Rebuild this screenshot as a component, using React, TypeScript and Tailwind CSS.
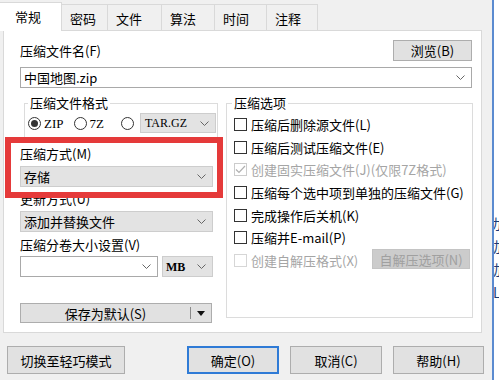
import React from "react";

const Chevron = () => (
  <svg width="9" height="5" viewBox="0 0 9 5" className="shrink-0">
    <polyline points="0.5,0.5 4.5,4.5 8.5,0.5" fill="none" stroke="#666" strokeWidth="1" />
  </svg>
);

const Combo = ({ children, gray, className }: { children?: React.ReactNode; gray?: boolean; className: string }) => (
  <div
    className={
      "flex items-center justify-between pl-[3px] pr-[6px] border leading-none " +
      (gray ? "bg-[#e3e3e3] border-[#cdcdcd] " : "bg-white border-[#a9a9a9] ") +
      className
    }
  >
    <span>{children}</span>
    <Chevron />
  </div>
);

const Check = ({ label, disabled, checked }: { label: string; disabled?: boolean; checked?: boolean }) => (
  <div className="flex items-center h-[22.7px]">
    <div
      className={
        "ml-[7px] w-[13px] h-[13px] border flex items-center justify-center bg-white " +
        (disabled ? "border-[#cccccc]" : "border-[#333333]")
      }
    >
      {checked && (
        <svg width="11" height="9" viewBox="0 0 11 9">
          <polyline points="1,4.5 4,7.5 10,1" fill="none" stroke="#b0b0b0" strokeWidth="1.2" />
        </svg>
      )}
    </div>
    <span className={"ml-[4px] leading-none " + (disabled ? "text-[#a5a5a5]" : "text-black")}>{label}</span>
  </div>
);

const Radio = ({ checked }: { checked?: boolean }) => (
  <div className="w-[13px] h-[13px] rounded-full border border-[#333] bg-white flex items-center justify-center shrink-0">
    {checked && <div className="w-[7px] h-[7px] rounded-full bg-[#333]" />}
  </div>
);

export default function App() {
  const tabs = [
    { t: "密码", w: 46 },
    { t: "文件", w: 54 },
    { t: "算法", w: 53 },
    { t: "时间", w: 52 },
    { t: "注释", w: 51 },
  ];
  return (
    <div className="w-[499px] h-[380px] bg-[#f0f0f0] flex overflow-hidden font-['Noto_Sans_CJK_SC',sans-serif] text-[13px] text-black">
      <div className="w-[492px] flex flex-col relative shrink-0">
        {/* Tabs */}
        <div className="h-[30px] flex items-end relative z-10">
          <div className="w-[62px] h-[29px] -mb-px bg-white border-t border-r border-[#d9d9d9] pl-[15px] pt-[7px] leading-none">
            常规
          </div>
          {tabs.map((tb) => (
            <div
              key={tb.t}
              style={{ width: tb.w }}
              className="h-[26px] bg-[#f0f0f0] border-t border-r border-[#d9d9d9] pl-[8px] pt-[7px] leading-none"
            >
              {tb.t}
            </div>
          ))}
        </div>

        {/* Panel */}
        <div className="ml-[3px] w-[479px] h-[303px] border border-[#d9d9d9] bg-white flex flex-col pl-[16px] pr-[9px]">
          <div className="mt-[9px] h-[21px] flex items-center justify-between">
            <span className="leading-none">压缩文件名(F)</span>
            <div className="w-[79px] h-[21px] bg-[#e1e1e1] border border-[#adadad] flex items-center justify-center leading-none">
              浏览(B)
            </div>
          </div>
          <Combo className="mt-[6px] h-[21px] w-[452px] pr-[5px]">中国地图.zip</Combo>

          <div className="mt-[8px] flex w-[453px]">
            {/* Left column */}
            <div className="w-[198px] flex flex-col">
              <fieldset className="ml-[4px] w-[194px] border border-[#dcdcdc] pb-[6px]">
                <legend className="ml-[3px] px-[2px] leading-[14px]">压缩文件格式</legend>
                <div className="mt-[3px] h-[20px] flex items-center">
                  <div className="ml-[3px]">
                    <Radio checked />
                  </div>
                  <span className="ml-[3px] leading-none font-['Liberation_Serif',serif]">ZIP</span>
                  <div className="ml-[10px]">
                    <Radio />
                  </div>
                  <span className="ml-[3px] leading-none font-['Liberation_Serif',serif]">7Z</span>
                  <div className="ml-[17px]">
                    <Radio />
                  </div>
                  <Combo gray className="ml-[6px] w-[76px] h-[20px] pl-[4px] font-['Liberation_Serif',serif] text-[12px]">
                    TAR.GZ
                  </Combo>
                </div>
              </fieldset>
              <span className="mt-[7px] h-[14px] leading-[14px]">压缩方式(M)</span>
              <Combo gray className="mt-[5px] h-[21px] w-[193px]">存储</Combo>
              <span className="mt-[5px] h-[14px] leading-[14px]">更新方式(U)</span>
              <Combo gray className="mt-[5px] h-[21px] w-[193px]">添加并替换文件</Combo>
              <span className="mt-[6px] h-[14px] leading-[14px]">压缩分卷大小设置(V)</span>
              <div className="mt-[4px] flex h-[21px]">
                <Combo className="w-[138px] h-[21px]" />
                <Combo gray className="ml-[4px] w-[51px] h-[21px] font-['Liberation_Serif',serif] text-[12px] font-bold">
                  MB
                </Combo>
              </div>
              <div className="mt-[26px] h-[20px] w-[192px] bg-[#e1e1e1] border border-[#adadad] flex items-center leading-none">
                <span className="w-[169px] text-center">保存为默认(S)</span>
                <div className="w-px h-[12px] bg-[#8a8a8a]" />
                <svg width="8" height="5" viewBox="0 0 8 5" className="ml-[6px]">
                  <polygon points="0,0 8,0 4,5" fill="#111" />
                </svg>
              </div>
            </div>

            {/* Right column */}
            <fieldset className="ml-[8px] w-[247px] h-[222px] border border-[#dcdcdc] flex flex-col">
              <legend className="ml-[5px] px-[2px] leading-[14px]">压缩选项</legend>
              <div className="mt-[3px] flex flex-col">
                <Check label="压缩后删除源文件(L)" />
                <Check label="压缩后测试压缩文件(E)" />
                <Check label="创建固实压缩文件(J)(仅限7Z格式)" disabled checked />
                <Check label="压缩每个选中项到单独的压缩文件(G)" />
                <Check label="完成操作后关机(K)" />
                <Check label="压缩并E-mail(P)" />
                <div className="flex items-center h-[22.7px]">
                  <div className="ml-[7px] w-[13px] h-[13px] border border-[#d6d6d6] bg-white" />
                  <span className="ml-[4px] leading-none text-[#a5a5a5]">创建自解压格式(X)</span>
                  <div className="ml-auto mr-[2px] -mt-[2px] w-[98px] h-[20px] bg-[#cccccc] border border-[#c4c4c4] text-[#a0a0a0] flex items-center justify-center leading-none">
                    自解压选项(N)
                  </div>
                </div>
              </div>
            </fieldset>
          </div>
        </div>

        {/* Bottom buttons */}
        <div className="mt-[13px] flex pl-[7px]">
          <div className="w-[118px] h-[28px] bg-[#e1e1e1] border border-[#adadad] flex items-center justify-center leading-none">
            切换至轻巧模式
          </div>
          <div className="ml-[62px] w-[92px] h-[28px] bg-[#e1e1e1] border-2 border-[#2f7bd6] flex items-center justify-center leading-none">
            确定(O)
          </div>
          <div className="ml-[11px] w-[92px] h-[28px] bg-[#e1e1e1] border border-[#adadad] flex items-center justify-center leading-none">
            取消(C)
          </div>
          <div className="ml-[11px] w-[91px] h-[28px] bg-[#e1e1e1] border border-[#adadad] flex items-center justify-center leading-none">
            帮助(H)
          </div>
        </div>

        {/* Red highlight overlay */}
        <div className="absolute left-[5px] top-[137px] w-[218px] h-[61px] border-[6px] border-[#e53a3a] pointer-events-none" />
      </div>

      {/* Window edge */}
      <div className="w-[2px] bg-[#5b8bd0] shrink-0" />
      <div className="flex-1 bg-white overflow-hidden flex flex-col pt-[212px] text-[#1d3b74] text-[14px] leading-[23px]">
        <span className="-ml-[7px]">功</span>
        <span className="-ml-[7px]">动</span>
        <span className="-ml-[7px]">动</span>
        <span className="-ml-[1px]">L</span>
      </div>
    </div>
  );
}
